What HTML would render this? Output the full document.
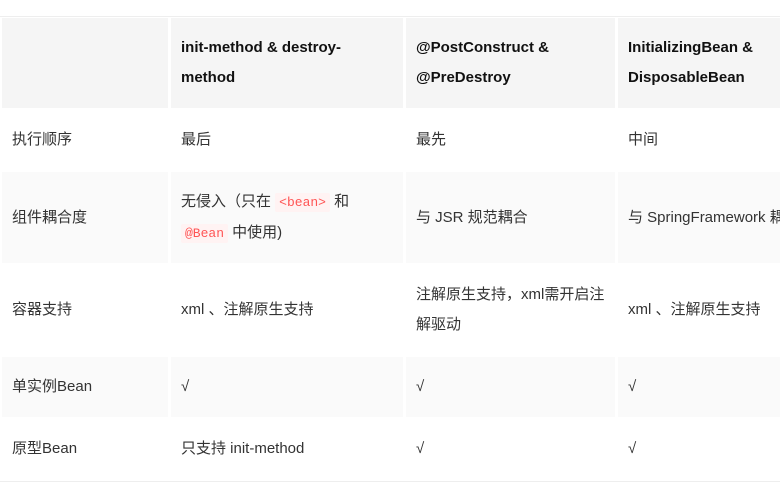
<!DOCTYPE html>
<html><head><meta charset="utf-8"><style>
body{margin:0;width:780px;height:485px;background:#fff;overflow:hidden;font-family:"Liberation Sans","Noto Sans CJK SC",sans-serif;font-size:15px;color:#333;position:relative}
.c{position:absolute;box-sizing:border-box;padding:0 10px;display:flex;align-items:center;line-height:30px;overflow:hidden}
.h{background:#f5f5f5;font-weight:bold;color:#111}
.g{background:#fafafa}
code{font-family:"Liberation Mono",monospace;font-size:13px;color:#f55;background:#fff3f3;padding:2px 4px;border-radius:2px}
.line{position:absolute;left:0;width:780px;height:1px;background:#eee}
</style></head><body>
<div class="line" style="top:16px"></div>
<div class="c h" style="left:2px;top:18px;width:166px;height:90px"></div>
<div class="c h" style="left:171px;top:18px;width:232px;height:90px"><div>init-method &amp; destroy-<br>method</div></div>
<div class="c h" style="left:406px;top:18px;width:209px;height:90px"><div>@PostConstruct &amp;<br>@PreDestroy</div></div>
<div class="c h" style="left:618px;top:18px;width:170px;height:90px"><div>InitializingBean &amp;<br>DisposableBean</div></div>

<div class="c" style="left:2px;top:108px;width:166px;height:64px">执行顺序</div>
<div class="c" style="left:171px;top:108px;width:232px;height:64px">最后</div>
<div class="c" style="left:406px;top:108px;width:209px;height:64px">最先</div>
<div class="c" style="left:618px;top:108px;width:170px;height:64px">中间</div>

<div class="c g" style="left:2px;top:172px;width:166px;height:91px">组件耦合度</div>
<div class="c g" style="left:171px;top:172px;width:232px;height:91px"><div>无侵入（只在 <code>&lt;bean&gt;</code> 和<br><code>@Bean</code> 中使用)</div></div>
<div class="c g" style="left:406px;top:172px;width:209px;height:91px">与 JSR 规范耦合</div>
<div class="c g" style="left:618px;top:172px;width:170px;height:91px;white-space:nowrap">与 SpringFramework 耦合</div>

<div class="c" style="left:2px;top:263px;width:166px;height:94px">容器支持</div>
<div class="c" style="left:171px;top:263px;width:232px;height:94px">xml 、注解原生支持</div>
<div class="c" style="left:406px;top:263px;width:209px;height:94px"><div>注解原生支持，xml需开启注<br>解驱动</div></div>
<div class="c" style="left:618px;top:263px;width:170px;height:94px">xml 、注解原生支持</div>

<div class="c g" style="left:2px;top:357px;width:166px;height:60px">单实例Bean</div>
<div class="c g" style="left:171px;top:357px;width:232px;height:60px">√</div>
<div class="c g" style="left:406px;top:357px;width:209px;height:60px">√</div>
<div class="c g" style="left:618px;top:357px;width:170px;height:60px">√</div>

<div class="c" style="left:2px;top:417px;width:166px;height:63px">原型Bean</div>
<div class="c" style="left:171px;top:417px;width:232px;height:63px">只支持 init-method</div>
<div class="c" style="left:406px;top:417px;width:209px;height:63px">√</div>
<div class="c" style="left:618px;top:417px;width:170px;height:63px">√</div>
<div class="line" style="top:481px"></div>
</body></html>
